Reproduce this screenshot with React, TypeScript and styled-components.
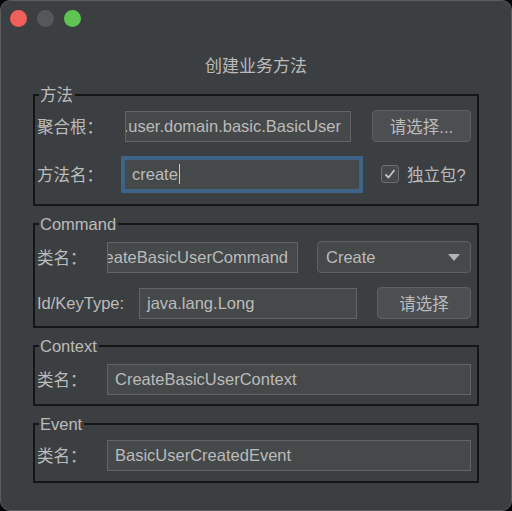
import React from "react";
import styled, { createGlobalStyle } from "styled-components";

const Global = createGlobalStyle`
  html, body { margin: 0; padding: 0; background: #000; }
  body { width: 512px; height: 511px; overflow: hidden; }
  * { box-sizing: border-box; }
`;

const FONT = `"Liberation Sans", "Noto Sans CJK SC", sans-serif`;

const Window = styled.div`
  width: 512px;
  height: 511px;
  background: #3c3f41;
  border: 1px solid #5a5c5e;
  border-radius: 10px;
  overflow: hidden;
  font-family: ${FONT};
  color: #bbbbbb;
  display: flex;
  flex-direction: column;
`;

const TitleBar = styled.div`
  height: 35px;
  display: flex;
  align-items: center;
  gap: 10px;
  padding-left: 9px;
`;

const Light = styled.span<{ $c: string }>`
  width: 17px;
  height: 17px;
  border-radius: 50%;
  background: ${(p) => p.$c};
`;

const Title = styled.div`
  text-align: center;
  font-size: 17px;
  line-height: 24px;
  margin-top: 19px;
  margin-bottom: 6px;
`;

const Groups = styled.div`
  display: flex;
  flex-direction: column;
  gap: 8px;
  padding: 0 32px 0 32px;
`;

const Group = styled.fieldset<{ $pt: number; $pb: number; $gap: number }>`
  margin: 0;
  border: 2px solid #161616;
  padding: ${(p) => p.$pt}px 6px ${(p) => p.$pb}px 2px;
  display: flex;
  flex-direction: column;
  gap: ${(p) => p.$gap}px;
  min-width: 0;
`;

const Legend = styled.legend`
  font-size: 16.5px;
  line-height: 20px;
  padding: 0 2px 0 1px;
  margin-left: 2px;
  color: #bbbbbb;
`;

const Row = styled.div`
  display: flex;
  align-items: center;
  height: 32px;
`;

const Label = styled.div<{ $w: number }>`
  width: ${(p) => p.$w}px;
  flex: none;
  font-size: 16.5px;
  white-space: nowrap;
`;

const Field = styled.div<{ $w?: number; $focus?: boolean; $end?: boolean }>`
  ${(p) => (p.$w ? `width: ${p.$w}px; flex: none;` : `flex: 1;`)}
  height: 31px;
  background: #45494a;
  border: 1px solid ${(p) => (p.$focus ? "#3f6387" : "#646464")};
  box-shadow: ${(p) => (p.$focus ? "0 0 0 3px #3f6387" : "none")};
  display: flex;
  align-items: center;
  justify-content: ${(p) => (p.$end ? "flex-end" : "flex-start")};
  padding: 0 ${(p) => (p.$end ? 9 : 6)}px 0 7px;
  overflow: hidden;
  white-space: nowrap;
  font-size: 16.5px;
  color: #bbbbbb;
`;

const Caret = styled.span`
  display: inline-block;
  width: 1.5px;
  height: 20px;
  background: #c8c8c8;
  margin-left: 1px;
`;

const Button = styled.div<{ $w: number }>`
  width: ${(p) => p.$w}px;
  height: 32px;
  margin-left: auto;
  flex: none;
  border: 1px solid #5e6062;
  border-radius: 4px;
  background: #4b4f51;
  display: flex;
  align-items: center;
  justify-content: center;
  font-size: 16.5px;
  color: #bbbbbb;
`;

const Select = styled.div<{ $w: number }>`
  width: ${(p) => p.$w}px;
  height: 32px;
  margin-left: auto;
  flex: none;
  border: 1px solid #5e6062;
  border-radius: 4px;
  background: #45494a;
  display: flex;
  align-items: center;
  justify-content: space-between;
  padding: 0 10px 0 8px;
  font-size: 16.5px;
`;

const Arrow = styled.span`
  width: 0;
  height: 0;
  border-left: 6px solid transparent;
  border-right: 6px solid transparent;
  border-top: 7px solid #b4b4b4;
`;

const CheckWrap = styled.div`
  display: flex;
  align-items: center;
  gap: 8px;
  margin-left: 21px;
  font-size: 16.5px;
`;

const Box = styled.span`
  width: 18px;
  height: 18px;
  border: 1px solid #6b6e70;
  border-radius: 3px;
  background: #45494a;
  display: flex;
  align-items: center;
  justify-content: center;
`;

export default function App() {
  return (
    <>
      <Global />
      <Window>
        <TitleBar>
          <Light $c="#ee6059" />
          <Light $c="#55585b" />
          <Light $c="#5ec552" />
        </TitleBar>
        <Title>创建业务方法</Title>
        <Groups>
          <Group $pt={5} $pb={14} $gap={16}>
            <Legend>方法</Legend>
            <Row>
              <Label $w={88}>聚合根：</Label>
              <Field $w={226} $end>com.example.user.domain.basic.BasicUser</Field>
              <Button $w={99}>请选择...</Button>
            </Row>
            <Row>
              <Label $w={87}>方法名：</Label>
              <Field $w={236} $focus>
                create
                <Caret />
              </Field>
              <CheckWrap>
                <Box>
                  <svg width="14" height="14" viewBox="0 0 14 14">
                    <polyline points="2.5,7.5 5.5,10.5 11.5,3" fill="none" stroke="#c4c4c4" strokeWidth="1.8" />
                  </svg>
                </Box>
                独立包?
              </CheckWrap>
            </Row>
          </Group>

          <Group $pt={7} $pb={7} $gap={14}>
            <Legend>Command</Legend>
            <Row>
              <Label $w={70}>类名：</Label>
              <Field $w={191} $end>CreateBasicUserCommand</Field>
              <Select $w={154}>
                Create
                <Arrow />
              </Select>
            </Row>
            <Row>
              <Label $w={102}>Id/KeyType:</Label>
              <Field $w={218}>java.lang.Long</Field>
              <Button $w={94}>请选择</Button>
            </Row>
          </Group>

          <Group $pt={7} $pb={9} $gap={0}>
            <Legend>Context</Legend>
            <Row>
              <Label $w={70}>类名：</Label>
              <Field>CreateBasicUserContext</Field>
            </Row>
          </Group>

          <Group $pt={5} $pb={10} $gap={0}>
            <Legend>Event</Legend>
            <Row>
              <Label $w={70}>类名：</Label>
              <Field>BasicUserCreatedEvent</Field>
            </Row>
          </Group>
        </Groups>
      </Window>
    </>
  );
}
